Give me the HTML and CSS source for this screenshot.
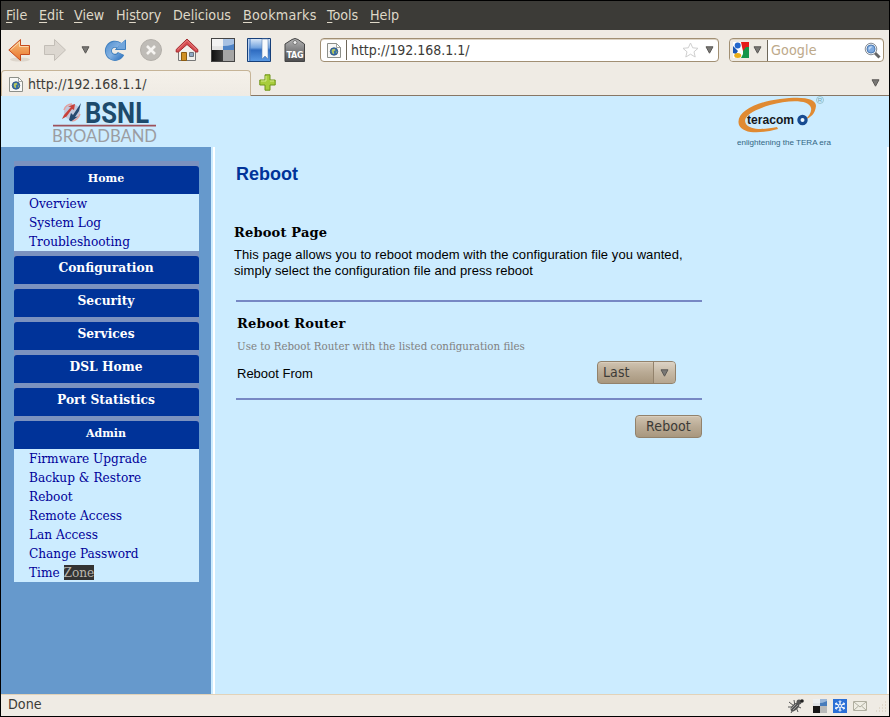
FILE: index.html
```html
<!DOCTYPE html>
<html lang="en">
<head>
<meta charset="utf-8">
<title>Reboot</title>
<link rel="stylesheet" href="styles.css">
</head>
<body>
<svg class="defs" width="0" height="0">
  <defs>
    <linearGradient id="orange" x1="0" y1="0" x2="0" y2="1"><stop offset="0" stop-color="#f7c27d"/><stop offset="1" stop-color="#e9722b"/></linearGradient>
    <linearGradient id="blue" x1="0" y1="0" x2="1" y2="1"><stop offset="0" stop-color="#5d97d4"/><stop offset=".5" stop-color="#84b2e2"/><stop offset="1" stop-color="#3f7fc6"/></linearGradient>
    <linearGradient id="book" x1="0" y1="0" x2="0" y2="1"><stop offset="0" stop-color="#dce9f8"/><stop offset=".4" stop-color="#73a3df"/><stop offset=".5" stop-color="#2e6bc0"/><stop offset="1" stop-color="#5b9be5"/></linearGradient>
    <linearGradient id="tag" x1="0" y1="0" x2="0" y2="1"><stop offset="0" stop-color="#b5b5b5"/><stop offset="1" stop-color="#4c4c4e"/></linearGradient>
    <linearGradient id="dark" x1="0" y1="0" x2="1" y2="0"><stop offset="0" stop-color="#111"/><stop offset="1" stop-color="#3b3b3b"/></linearGradient>
    <symbol id="page" viewBox="0 0 16 17"><path d="M1.500 1.500h9l4 4v10h-13z" fill="#f8f8f6" stroke="#8c8f89"/><path d="M10.500 1.500v4h4z" fill="#fff" stroke="#8c8f89" stroke-width=".8"/><circle cx="8" cy="9.500" r="3.800" fill="#376fa8" stroke="#254a74" stroke-width=".7"/><path d="M6 7.500l2.500-.8 1 1.500-1.800 1 .5 2.500-1.300.3-1.200-2.500zM9.800 10l1.200-.8-.6 2.400z" fill="#b9c85b"/></symbol>
    <symbol id="squares" viewBox="0 0 24 24"><path d="M0 0h24v24H0z" fill="#444"/><path d="M1 1h11v11H1z" fill="#e4e4e4"/><path d="M12 1h11v11H12z" fill="#4e83c6"/><path d="M1 12h11v11H1z" fill="url(#dark)"/><path d="M12 12h11v11H12z" fill="#a5a5a5"/><path d="M1 1h22v5Q16 9 1 8z" fill="#fff" opacity=".5"/></symbol>
  </defs>
</svg>
<div class="window">
  <nav class="menubar">
    <span class="m1"><u>F</u>ile</span><span class="m2"><u>E</u>dit</span><span class="m3"><u>V</u>iew</span><span class="m4">Hi<u>s</u>tory</span><span class="m5">De<u>l</u>icious</span><span class="m6"><u>B</u>ookmarks</span><span class="m7"><u>T</u>ools</span><span class="m8"><u>H</u>elp</span>
  </nav>
  <div class="toolbar">
    <svg class="t-back" width="24" height="24" viewBox="0 0 24 24"><ellipse cx="12" cy="21.500" rx="10" ry="2" fill="#ddd6cc"/><path d="M.8 12L12.500 1.500v6h9v9h-9v6z" fill="url(#orange)" stroke="#c64a1c" stroke-linejoin="round"/><path d="M2.800 11.700l8.700-7.700v4.500h9" fill="none" stroke="#fbd9ae"/></svg>
    <svg class="t-forward" width="24" height="24" viewBox="0 0 24 24"><path d="M22.500 12L11.500 1.500v6h-10v9h10v6z" fill="#dcd7d0" stroke="#c3beb7" stroke-linejoin="round"/></svg>
    <svg class="t-arrow" width="9" height="8" viewBox="0 0 9 8"><path d="M1 .8h7L4.500 7.200z" fill="#797875" stroke="#5a5855"/></svg>
    <svg class="t-reload" width="24" height="24" viewBox="0 0 24 24"><path d="M18 15.500A6.600 6.600 0 1 1 16 7.500" fill="none" stroke="#3f7fbe" stroke-width="7"/><path d="M22.500 2v9.500H12.500z" fill="#6ea4db" stroke="#3f7fbe"/><path d="M18 16A6.700 6.700 0 1 1 16 7.500" fill="none" stroke="url(#blue)" stroke-width="5.400"/><path d="M16 6l6-3v8h-7z" fill="#72a6dc"/></svg>
    <svg class="t-stop" width="24" height="24" viewBox="0 0 24 24"><circle cx="12" cy="12" r="10.500" fill="#bfbcb7" stroke="#b3afa9"/><path d="M8 8l8 8M16 8l-8 8" stroke="#f6f4f1" stroke-width="2.600"/></svg>
    <svg class="t-home" width="24" height="24" viewBox="0 0 24 24"><path d="M3.500 12v10.500h17V12L12 4z" fill="#f1f0ec" stroke="#777"/><path d="M6.500 14.500h5v8h-5z" fill="#cf8f22" stroke="#8b5b11"/><path d="M14.500 14.500h4v4h-4z" fill="#91a9c4" stroke="#6a747f"/><path d="M1.200 11.500L12 1l10.800 10.500V14h-2L12 6.500 3.500 14h-2.300z" fill="#d64b4f" stroke="#a52a2f" stroke-linejoin="round"/><path d="M2.500 11.800L12 2.500l9.500 9.300" fill="none" stroke="#e88786"/></svg>
    <svg class="t-squares" width="24" height="24"><use href="#squares"/></svg>
    <svg class="t-book" width="24" height="24" viewBox="0 0 24 24"><path d="M.5.5h23v23H.5z" fill="url(#book)" stroke="#163f79"/><path d="M1.500 1v22" stroke="#b8d0ef" stroke-width="1"/><path d="M3 1v22" stroke="#4a7fc4"/><path d="M15 1h6v20l-3-3-3 3z" fill="#f8fafc" stroke="#5e83b2" stroke-width=".6"/></svg>
    <svg class="t-tag" width="22" height="24" viewBox="0 0 22 24"><path d="M1 6l7-4.500Q11-.5 14 1.500L20.500 6v17.500H1z" fill="url(#tag)" stroke="#444"/><circle cx="11" cy="4.500" r="2" fill="#eee" stroke="#777"/><text x="11" y="20" text-anchor="middle" textLength="17">TAG</text></svg>
    <div class="urlbar">
      <span class="site"><svg width="16" height="17"><use href="#page"/></svg></span>
      <span class="url">http://192.168.1.1/</span>
      <svg width="17" height="16" viewBox="0 0 17 16"><path d="M8.500 1l2.200 4.800 5.300.5-4 3.500 1.200 5.200-4.700-2.800L3.800 15 5 9.800 1 6.300l5.300-.5z" fill="#fff" stroke="#cfcfcf"/></svg>
      <svg class="drop" width="9" height="8" viewBox="0 0 9 8"><path d="M1 .8h7L4.500 7.200z" fill="#797875" stroke="#5a5855"/></svg>
    </div>
    <div class="search">
      <span class="engine">
        <svg width="16" height="16" viewBox="0 0 16 16"><path d="M0 0h16v16H0z" fill="#fff"/><path d="M8 0h8v5H9z" fill="#e51b18"/><path d="M10 5h6v11H8l2-4z" fill="#14964a"/><path d="M0 4l5 5-2 3-3-1z" fill="#1b57b5"/><path d="M9 5l4 0-3 4z" fill="#e51b18"/><circle cx="4.700" cy="3.500" r="3" fill="#2467cc"/><ellipse cx="4.700" cy="13.500" rx="3.500" ry="2.500" fill="#eaad17"/></svg>
        <svg width="9" height="8" viewBox="0 0 9 8"><path d="M1 .8h7L4.500 7.200z" fill="#797875" stroke="#5a5855"/></svg>
      </span>
      <span class="hint">Google</span>
      <svg width="17" height="17" viewBox="0 0 17 17"><path d="M11 11l4.500 4.500" stroke="#656565" stroke-width="3"/><circle cx="7" cy="7" r="5.800" fill="#e6ebf0" stroke="#8b9097"/><circle cx="7" cy="7" r="4" fill="#7eaae0" stroke="#4e7cb4"/><path d="M4.500 6Q6 3.500 8.500 4.500L5 8z" fill="#c3daf5"/></svg>
    </div>
  </div>
  <div class="tabs">
    <div class="tab"><svg width="16" height="17"><use href="#page"/></svg><span class="url">http://192.168.1.1/</span></div>
    <div class="rest">
      <svg width="17" height="17" viewBox="0 0 17 17"><path d="M6 .8h5V6h5.200v5H11v5.200H6V11H.8V6H6z" fill="#a8cd3c" stroke="#6f9419"/><path d="M7 2v5H2M11 7h4" fill="none" stroke="#d5ea8b"/></svg>
      <svg width="9" height="8" viewBox="0 0 9 8"><path d="M1 .8h7L4.500 7.200z" fill="#797875" stroke="#5a5855"/></svg>
    </div>
  </div>
  <div class="page">
    <header class="brand">
      <svg class="bsnl" width="108" height="51" viewBox="0 0 108 51">
        <circle cx="20" cy="16" r="8" fill="#c3c8dc"/><path d="M12 14Q14 8 20 8M20 25q6-1 8-7" stroke="#e3a09e" stroke-width="1.500" fill="none"/><path d="M10 23l2-4 7-8-3-.5 7-2.500-1 6-2-1-5.500 7.500z" fill="#c8403a"/><path d="M17 24l2-7 2 2 8-12-2 8-4 6 3-.5-7 5z" fill="#274970"/>
        <text class="bsnl-name" x="33" y="27" textLength="64" lengthAdjust="spacingAndGlyphs">BSNL</text>
        <path d="M1 29.700h103" stroke="#9d515b" stroke-width="1.800"/>
        <text class="bsnl-sub" x="0" y="46" textLength="105" lengthAdjust="spacingAndGlyphs">BROADBAND</text>
      </svg>
      <svg class="teracom" width="98" height="51" viewBox="0 0 98 51">
        <path fill-rule="evenodd" d="M2 29C-2 17 17 6 43 3 65 0 79 2 79 10c-1 8-5 11-11 14 4-4 7-8 6-12C72 3 51 4 33 9 14 15 5 21 9 28c4 6 17 6 31 3l1 2C23 38 6 38 2 29z" fill="#e08a32"/>
        <text class="tera-name" x="10" y="27.500" textLength="47" lengthAdjust="spacingAndGlyphs">teracom</text>
        <circle cx="65.500" cy="24" r="3.600" fill="#eef8ff" stroke="#174b91" stroke-width="3.200"/>
        <circle cx="83" cy="4" r="3.500" fill="none" stroke="#82b5bd" stroke-width=".7"/><text class="reg" x="80.800" y="6">R</text>
        <text class="tera-sub" x="0" y="49" textLength="94" lengthAdjust="spacingAndGlyphs">enlightening the TERA era</text>
      </svg>
    </header>
    <div class="columns">
      <aside class="sidebar">
        <section><h2 class="open">Home</h2><a>Overview</a><a>System Log</a><a>Troubleshooting</a></section>
        <section><h2>Configuration</h2></section>
        <section><h2>Security</h2></section>
        <section><h2>Services</h2></section>
        <section><h2>DSL Home</h2></section>
        <section><h2>Port Statistics</h2></section>
        <section><h2 class="open">Admin</h2><a>Firmware Upgrade</a><a>Backup &amp; Restore</a><a>Reboot</a><a>Remote Access</a><a>Lan Access</a><a>Change Password</a><a>Time <mark>Zone</mark></a></section>
      </aside>
      <main class="content">
        <h1>Reboot</h1>
        <div class="intro"><h3>Reboot Page</h3><p>This page allows you to reboot modem with the configuration file you wanted,<br>simply select the configuration file and press reboot</p></div>
        <div class="router">
          <h3>Reboot Router</h3>
          <p class="note">Use to Reboot Router with the listed configuration files</p>
          <div class="row"><span class="label">Reboot From</span><div class="select"><span>Last</span><i><svg width="9" height="8" viewBox="0 0 9 8"><path d="M1 .8h7L4.500 7.200z" fill="#797875" stroke="#5a5855"/></svg></i></div></div>
        </div>
        <div class="actions"><button>Reboot</button></div>
      </main>
    </div>
  </div>
  <footer class="status">
    <span>Done</span>
    <div class="tray">
      <svg class="bug" width="17" height="16" viewBox="0 0 17 16"><path d="M2 4l5 4M1 9h6M4 15l3-5M7 2l1 6M11 14l-2-5M14 10l-4-2" stroke="#555"/><ellipse cx="8" cy="9" rx="5.500" ry="3" transform="rotate(-45 8 9)" fill="#565656"/><path d="M4 11l5-5M6 12l5-5" stroke="#aaa" stroke-width=".8"/><circle cx="12" cy="4" r="2.500" fill="#555"/><circle cx="15" cy="3" r="1.800" fill="#222"/></svg>
      <svg width="14" height="14" viewBox="0 0 14 14"><path d="M0 0h7v7H0z" fill="#dfe3e7"/><path d="M7 0h7v7H7z" fill="#477bbb"/><path d="M0 7h7v7H0z" fill="#181818"/><path d="M7 7h7v7H7z" fill="#b9b9b9"/><path d="M0 0h14v2Q9 5 0 4z" fill="#fff" opacity=".45"/></svg>
      <svg width="14" height="14" viewBox="0 0 14 14"><path d="M0 0h14v14H0z" fill="#2a6fd6"/><path d="M7 1.500v11M2.200 4.200l9.600 5.600M2.200 9.800l9.600-5.600" stroke="#fff" stroke-width="1.200"/><path d="M5.500 2L7 3.500 8.500 2M5.500 12L7 10.500 8.500 12M2 5.800l2-.5-.5-2M12 5.800l-2-.5.5-2M2 8.200l2 .5-.5 2M12 8.200l-2 .5.5 2" stroke="#fff" stroke-width=".7" fill="none"/><circle cx="7" cy="7" r="1.500" fill="#2a6fd6" stroke="#fff" stroke-width=".8"/></svg>
      <svg width="14" height="10" viewBox="0 0 14 10"><path d="M.5.5h13v9H.5z" fill="#efede4" stroke="#b0aea0"/><path d="M1 1l6 5 6-5M1 9l4.500-4M13 9L8.500 5" stroke="#b0aea0" fill="none"/></svg>
      <svg class="grip" width="11" height="14" viewBox="0 0 11 14"><path d="M9 2h1M6 5h1M9 5h1M3 8h1M6 8h1M9 8h1M0 11h1M3 11h1M6 11h1M9 11h1" stroke="#d2c6b2"/></svg>
    </div>
  </footer>
</div>
</body>
</html>
```
FILE: styles.css
```css
* { box-sizing: border-box; }
body { margin: 0; background: #000; }
.defs { display: block; height: 0; }
h1, h2, h3, p { margin: 0; }
svg { display: block; flex: none; }
.window { width: 890px; height: 717px; border: 1px solid #000; display: flex; flex-direction: column; overflow: hidden; background: #efebe4; font: 14.2px/18px "DejaVu Sans Condensed", "DejaVu Sans", sans-serif; font-stretch: condensed; color: #3c3b37; }
.menubar { height: 29px; background: #3c3b37; color: #dfd8c8; display: flex; align-items: center; padding: 0 0 2px 5px; }
.menubar u { text-underline-offset: 2px; }
.m1 { width: 33px; } .m2 { width: 35px; } .m3 { width: 42px; } .m4 { width: 57px; }
.m5 { width: 70px; } .m6 { width: 84px; letter-spacing: .25px; } .m7 { width: 43px; }
.toolbar { height: 40px; display: flex; align-items: center; padding: 0 5px 0 7px; }
.t-forward { margin-left: 11px; }
.t-arrow { margin-left: 14px; }
.t-reload { margin-left: 13px; }
.t-stop { margin-left: 12px; }
.t-home { margin-left: 12px; }
.t-squares, .t-book { margin-left: 12px; }
.t-tag { margin-left: 13px; }
.t-tag text { font: bold 8px "DejaVu Sans", sans-serif; fill: #fff; }
.urlbar, .search { flex: none; height: 24px; border: 1px solid #a18f73; border-radius: 4px; background: #fff; display: flex; align-items: center; box-shadow: inset 0 1px 0 #ddd4c5; }
.urlbar { width: 399px; margin-left: 14px; padding-right: 4px; }
.site { width: 26px; height: 20px; border-right: 1px solid #6e675a; display: flex; align-items: center; padding-left: 5px; }
.url { flex: 1; font-size: 14px; letter-spacing: -.03px; }
.urlbar .url { padding-left: 4px; }
.urlbar .drop { margin-left: 6px; }
.search { width: 155px; margin-left: 10px; padding-right: 2px; }
.engine { width: 38px; height: 21px; border-right: 1px solid #6e675a; background: #efebe4; display: flex; align-items: center; gap: 4px; padding-left: 3px; border-radius: 3px 0 0 3px; }
.hint { flex: 1; padding-left: 3px; color: #bda98a; letter-spacing: .1px; }
.tabs { height: 26px; display: flex; }
.tab { width: 250px; height: 26px; border: 1px solid #c6b497; border-bottom: 0; border-radius: 4px 4px 0 0; background: linear-gradient(#f5f1ea, #efebe4); display: flex; align-items: center; padding: 2px 0 0 6px; gap: 4px; }
.tab span { padding-bottom: 2px; }
.rest { flex: 1; display: flex; align-items: center; justify-content: space-between; padding: 0 9px 0 8px; border-bottom: 1px solid #887765; }
.page { height: 598px; background: #ccecff; }
.brand { height: 51px; display: flex; justify-content: space-between; padding: 0 54px 0 51px; }
.bsnl-name { font: bold 30px Roboto, sans-serif; fill: #1c4a6c; }
.bsnl-sub { font: 17px Lato, sans-serif; fill: #9b9da2; }
.tera-name { font: bold 12px "Liberation Sans", sans-serif; fill: #15171c; }
.tera-sub { font: 8px "Liberation Sans", sans-serif; fill: #326683; }
.reg { font: 6px "Liberation Sans", sans-serif; fill: #6ba4ad; }
.columns { height: 547px; display: flex; }
.sidebar { width: 210px; background: #6699cc; padding: 14px 12px 0 13px; font: 13.5px/19px "DejaVu Serif Condensed", "DejaVu Serif", serif; font-stretch: condensed; }
.sidebar section { border-top: 5px solid #7b92bf; background: linear-gradient(#7b92bf 28px, #ccecff 28px); }
.sidebar h2 { height: 28px; background: #003399; border-radius: 3px 3px 0 0; color: #fff; text-align: center; font: bold 13.65px/23px "DejaVu Serif Condensed", "DejaVu Serif", serif; font-stretch: condensed; padding-right: 1px; }
.sidebar h2.open { font: bold 11px/25px "DejaVu Serif", serif; }
.sidebar a { display: block; height: 19px; padding-left: 15px; color: #000099; }
.sidebar mark { background: #333; color: #b9b6ae; display: inline-block; height: 15px; line-height: 15px; }
.content { flex: 1; margin-left: 2px; border-left: 2px solid #fff; border-right: 2px solid #fff; padding: 17px 0 0 19px; font: 13px/16px "Liberation Sans", sans-serif; color: #000; }
.content h1 { padding-left: 2px; font: bold 18px/20px "Liberation Sans", sans-serif; color: #003399; }
.content h3 { font: bold 13px/16px "DejaVu Serif", serif; letter-spacing: .18px; }
.intro { margin-top: 41px; height: 75px; }
.intro p { margin-top: 6px; letter-spacing: .065px; }
.router { margin-left: 2px; width: 466px; height: 100px; border-top: 2px solid #7788c4; border-bottom: 2px solid #7788c4; padding: 14px 0 0 1px; }
.note { margin-top: 7px; font: 11.4px/15px "DejaVu Serif Condensed", "DejaVu Serif", serif; font-stretch: condensed; color: #808080; }
.row { display: flex; justify-content: space-between; align-items: center; padding-right: 26px; margin-top: 7px; }
.label { padding-top: 2px; }
.select, button { border: 1px solid #92826c; border-radius: 4px; background: linear-gradient(#d0c3b0, #b9aa94 50%, #a8977e); color: #3c3b37; font: 14px/18px "DejaVu Sans Condensed", "DejaVu Sans", sans-serif; font-stretch: condensed; box-shadow: inset 0 1px 0 #d9cebd; }
.select { width: 79px; height: 23px; display: flex; overflow: hidden; }
.select span { flex: 1; padding: 1px 0 0 5px; letter-spacing: .1px; }
.select i { width: 22px; border-left: 1px solid #92826c; background: linear-gradient(#dcd3c5, #c6b9a5 50%, #b6a690); display: flex; align-items: center; justify-content: center; }
.actions { width: 468px; display: flex; justify-content: flex-end; margin-top: 15px; }
button { width: 67px; height: 23px; padding: 0 0 2px; letter-spacing: .1px; }
.status { height: 22px; border-top: 1px solid #e2d2b8; display: flex; align-items: center; justify-content: space-between; padding: 0 1px 0 7px; }
.status > span { padding-bottom: 3px; }
.tray { display: flex; align-items: center; gap: 6px; padding-right: 1px; }
.bug { margin-right: 3px; }
.grip { margin-left: 3px; align-self: flex-end; }
```
